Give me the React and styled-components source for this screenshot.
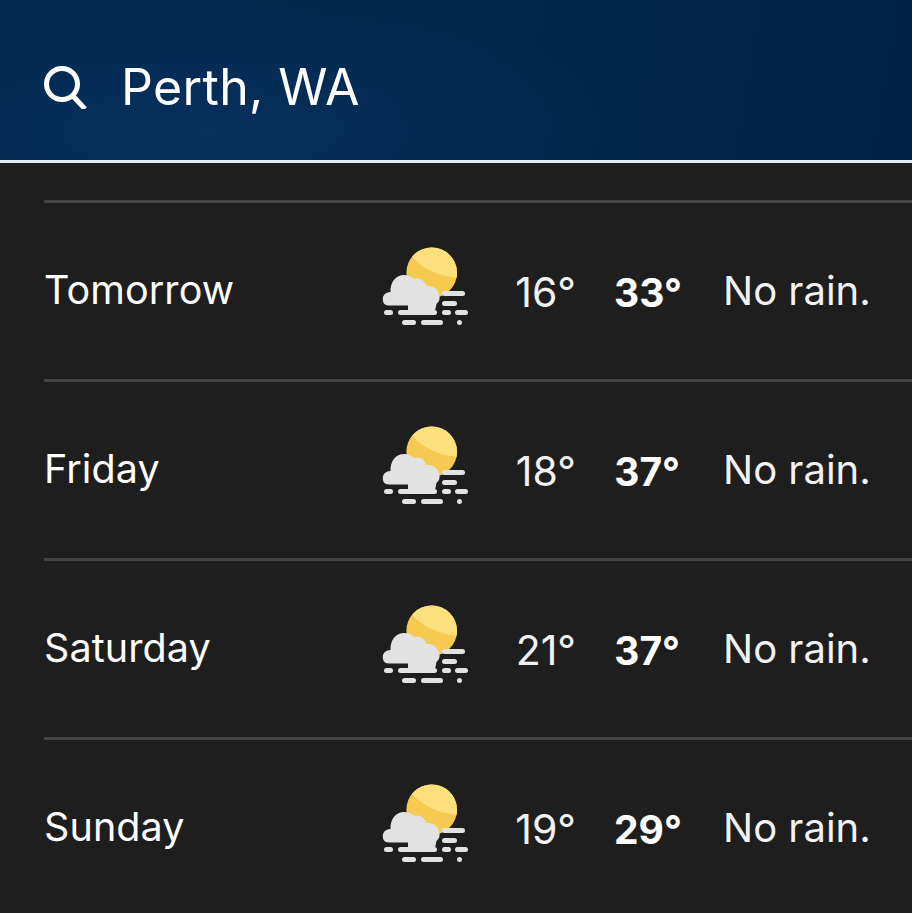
import styled, { createGlobalStyle } from 'styled-components';

const Global = createGlobalStyle`
  html, body {
    margin: 0;
    padding: 0;
    background: #1e1e1e;
    font-family: Inter, "Noto Sans", sans-serif;
    overflow: hidden;
  }
`;

const Page = styled.div`
  width: 912px;
  height: 913px;
  overflow: hidden;
  background: #1e1e1e;
`;

const Header = styled.header`
  height: 160px;
  box-sizing: content-box;
  border-bottom: 3px solid #e6eef4;
  display: flex;
  align-items: center;
  padding-left: 44px;
  gap: 35px;
  background:
    radial-gradient(ellipse 420px 130px at 210px 130px, #05305c 0%, rgba(5, 48, 92, 0) 100%),
    linear-gradient(100deg, #03284f 0%, #03264c 50%, #022043 100%);
`;

const SearchSvg = styled.svg`
  margin-top: 12px;
`;

const Title = styled.h1`
  margin: 14px 0 0 -2px;
  color: #fff;
  font-size: 50px;
  font-weight: 400;
  letter-spacing: 0.35px;
  line-height: 56px;
`;

const List = styled.div`
  padding: 37px 0 0 44px;
`;

const Row = styled.div`
  height: 176px;
  border-top: 3px solid #444444;
  display: grid;
  grid-template-columns: 336px 135px 61px 38px 66px 43px 1fr;
  align-items: center;
  color: #fff;
  font-size: 40px;
`;

const Day = styled.div`
  margin-top: -3px;
  font-size: 39.5px;
  font-weight: 440;
  letter-spacing: 0.1px;
`;

const Cloud = styled.div`
  display: flex;
  height: 84px;
  margin-top: -7px;
`;

const Low = styled.div`
  grid-column: 3;
  text-align: right;
  margin-top: 2px;
  font-size: 41px;
  color: #f2f2f2;
`;

const High = styled.div`
  grid-column: 5;
  text-align: right;
  font-size: 39px;
  font-weight: 700;
  margin-top: 2px;
`;

const Rain = styled.div`
  grid-column: 7;
  margin-top: -2px;
  white-space: nowrap;
  color: #f2f2f2;
`;

function SearchIcon() {
  return (
    <SearchSvg width="44" height="46" viewBox="0 0 44 46" fill="none" stroke="#fff" strokeWidth="5">
      <circle cx="18" cy="21" r="15.5" />
      <path d="M29 33 L41 46" />
    </SearchSvg>
  );
}

function SunCloudIcon() {
  return (
    <svg width="90" height="84" viewBox="0 0 90 84">
      <circle cx="51.7" cy="26.7" r="25.3" fill="#f6c951" />
      <path d="M32 11 A25.3 25.3 0 0 1 76.5 32 C66 30 48 28 32 11 Z" fill="#fde07e" />
      <g fill="#e2e2e2">
        <path d="M9 59.5 C4 59.5 2.8 56 2.8 53 C2.8 49 6 46 10.5 46 C10 36 16 29 24 29 C29 29 32 31 34 33 C40 31 45 35 46 40 C52 39 58 43 59.5 50 C60 53 59 56 56.5 58 L55 65 L28 65 L28 59.5 Z" />
        <rect x="62" y="45" width="23" height="5" rx="2.5" />
        <rect x="62" y="55" width="15" height="5" rx="2.5" />
        <rect x="4" y="64" width="9" height="5" rx="2.5" />
        <rect x="18" y="64" width="39" height="5" rx="2.5" />
        <rect x="62" y="64" width="9" height="5" rx="2.5" />
        <rect x="75" y="64" width="13" height="5" rx="2.5" />
        <rect x="22" y="74" width="14" height="5" rx="2.5" />
        <rect x="41" y="74" width="22" height="5" rx="2.5" />
        <rect x="77" y="74" width="5" height="5" rx="2.5" />
      </g>
    </svg>
  );
}

const days = [
  { day: 'Tomorrow', low: 16, high: 33 },
  { day: 'Friday', low: 18, high: 37 },
  { day: 'Saturday', low: 21, high: 37 },
  { day: 'Sunday', low: 19, high: 29 },
];

export default function App() {
  return (
    <Page>
      <Global />
      <Header>
        <SearchIcon />
        <Title>Perth, WA</Title>
      </Header>
      <List>
        {days.map((d) => (
          <Row key={d.day}>
            <Day>{d.day}</Day>
            <Cloud>
              <SunCloudIcon />
            </Cloud>
            <Low>{d.low}°</Low>
            <High>{d.high}°</High>
            <Rain>No rain.</Rain>
          </Row>
        ))}
      </List>
    </Page>
  );
}
